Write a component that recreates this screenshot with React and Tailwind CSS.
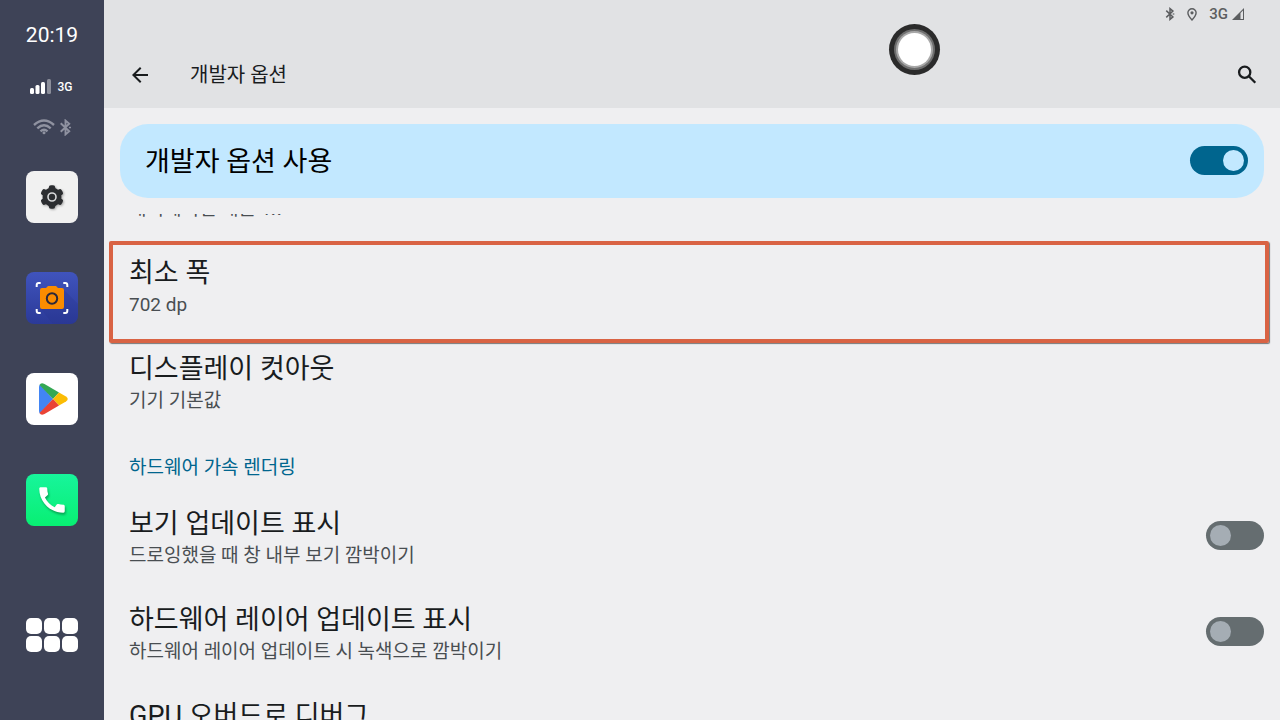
import React, { useState } from 'react';
import { MdArrowBack, MdCall } from 'react-icons/md';

const SettingsIcon = () => (
  <svg viewBox="0 0 52 52" className="w-full h-full drop-shadow-[1px_1px_1px_rgba(0,0,0,0.3)]">
    <g fill="#2c2e31">
      <circle cx="26" cy="26" r="9.5" />
      {[0, 60, 120].map(angle => (
        <rect key={angle} x="22.8" y="14.2" width="6.4" height="23.6" rx="2.2" transform={`rotate(${angle} 26 26)`} />
      ))}
    </g>
    <circle cx="26" cy="26" r="4" fill="#2c2e31" stroke="#d9dadb" strokeWidth="1.6" />
  </svg>
);

const CameraIcon = () => (
  <svg viewBox="0 0 52 52" className="w-full h-full">
    <path d="M38 18 52 32V52H27L15 37Z" fill="#26348c" opacity=".25" />
    <path
      d="M10.700 15v-2q0-2 2-2h2M37.300 11h2q2 0 2 2v2M41.300 37v2q0 2-2 2h-2M14.700 41h-2q-2 0-2-2v-2"
      fill="none"
      stroke="#fff"
      strokeWidth="2"
    />
    <path d="M16 16h4l2-2h8l2 2h4q2 0 2 2v17q0 2-2 2H16q-2 0-2-2V18q0-2 2-2Z" fill="#fb8c00" />
    <circle cx="26" cy="26.500" r="5.200" fill="none" stroke="#2d2838" strokeWidth="2" />
  </svg>
);

const PlayIcon = () => (
  <svg viewBox="0 0 52 52" className="w-full h-full">
    <path d="M14 11.500Q13 12.500 13 14v24q0 1.500 1 2.500L27 26Z" fill="#4285f4" />
    <path d="M13.500 12q1.500-3 5-1L33 19.500 27 26Z" fill="#34a853" />
    <path d="M33 19.500l7 4q3.500 2.500 0 5l-7 4L27 26Z" fill="#fbbc04" />
    <path d="M13.500 40q1.500 3 5 1L33 32.500 27 26Z" fill="#ea4335" />
  </svg>
);

const SignalBars = () => (
  <svg viewBox="0 0 22 16" className="w-[22px] h-4" fill="#fff">
    <rect x="0" y="10" width="4" height="6" rx="1.500" />
    <rect x="5.500" y="7" width="4" height="9" rx="1.500" />
    <rect x="11" y="4" width="4" height="12" rx="1.500" />
    <rect x="17" y="1" width="4" height="15" rx="1.500" opacity=".4" />
  </svg>
);

const WifiIcon = () => (
  <svg viewBox="0 0 22 16" className="w-[22px] h-4" fill="none" stroke="currentColor" strokeWidth="2.4">
    <path d="M1 6Q11-3 21 6M4.300 9.300Q11 3.300 17.700 9.300M7.500 12.300Q11 9.200 14.500 12.300" />
    <circle cx="11" cy="13.700" r="1.500" fill="currentColor" stroke="none" />
  </svg>
);

const BluetoothIcon = ({ className }) => (
  <svg viewBox="0 0 12 16" className={className} fill="none" stroke="currentColor" strokeWidth="1.8">
    <path d="M1.500 4 9.500 11.500 6 14.500V1.500L9.500 4.500 1.500 12" />
    <path d="M9.200 8h2" strokeWidth="1.4" />
  </svg>
);

const PlaceIcon = () => (
  <svg viewBox="0 0 10 13" className="w-2.5 h-[13px]" fill="none" stroke="currentColor" strokeWidth="1.4">
    <path d="M5 12Q.9 7.600.9 4.800a4.100 4.100 0 0 1 8.200 0Q9.100 7.600 5 12Z" />
    <circle cx="5" cy="4.800" r="1.600" fill="currentColor" stroke="none" />
  </svg>
);

const SearchIcon = () => (
  <svg viewBox="0 0 24 24" className="w-6 h-6" fill="none" stroke="currentColor" strokeWidth="2.3">
    <circle cx="9.700" cy="9.200" r="5.600" />
    <path d="M13.800 13.300 20.300 19.800" />
  </svg>
);

const apps = [
  { name: '설정', icon: <SettingsIcon />, style: 'bg-[#f1f1f1]' },
  { name: '스크린샷', icon: <CameraIcon />, style: 'bg-linear-to-b from-[#4054bd] to-[#2b3a98]' },
  { name: 'Play 스토어', icon: <PlayIcon />, style: 'bg-white' },
  {
    name: '전화',
    icon: <MdCall className="w-[34px] h-[34px] text-white drop-shadow-[1px_2px_1px_rgba(0,90,40,0.5)]" />,
    style: 'bg-linear-to-b from-[#17f59b] to-[#08ef72]'
  }
];

// Left launcher bar
const Sidebar = () => (
  <nav className="w-[104px] shrink-0 bg-[#3e4357] text-white flex flex-col items-center pt-[23px] pb-[68px]">
    <time className="text-[21px] leading-6">20:19</time>
    <div className="mt-[31px] h-4 flex items-center gap-1.5 pr-0.5">
      <SignalBars />
      <span className="text-xs leading-4 pt-0.5 font-medium">3G</span>
    </div>
    <div className="mt-[23px] h-5 mb-[34px] flex items-center gap-1 text-[#8f92a0]">
      <WifiIcon />
      <BluetoothIcon className="w-[13px] h-[17px]" />
    </div>
    <div className="flex flex-col gap-[49px]">
      {apps.map(app => (
        <button
          key={app.name}
          aria-label={app.name}
          className={`w-[52px] h-[52px] rounded-lg overflow-hidden flex items-center justify-center ${app.style}`}
        >
          {app.icon}
        </button>
      ))}
    </div>
    <button aria-label="모든 앱" className="mt-auto grid grid-cols-3 gap-0.5">
      {[1, 2, 3, 4, 5, 6].map(n => (
        <span key={n} className="w-4 h-4 rounded-[5px] bg-white" />
      ))}
    </button>
  </nav>
);

const Switch = ({ id, checked, onChange }) => (
  <input
    id={id}
    type="checkbox"
    role="switch"
    checked={checked}
    onChange={e => onChange(e.target.checked)}
    className="appearance-none shrink-0 w-[58px] h-[29px] rounded-full p-1 flex items-center cursor-pointer bg-[#656d70] checked:bg-[#00658e] checked:justify-end before:w-[21px] before:h-[21px] before:rounded-full before:bg-[#a5adb4] checked:before:bg-[#c2e8ff]"
  />
);

const Row = ({ title, summary, highlighted, children, id }) => (
  <div className="relative pl-[25px] pr-4 py-4 flex justify-between">
    <div>
      {id ? (
        <label htmlFor={id} className="block text-[27px] leading-8 text-[#191c1e]">{title}</label>
      ) : (
        <h2 className="text-[27px] leading-8 text-[#191c1e]">{title}</h2>
      )}
      <p className="text-[19px] leading-8 text-[#494e52]">{summary}</p>
    </div>
    <div className="pt-[13px]">{children}</div>
    {highlighted && (
      <div className="absolute left-[5px] right-[11px] top-0 -bottom-1.5 rounded-xs border-4 border-[#d96344] shadow-[1px_1px_1px_rgba(0,0,0,0.5)] pointer-events-none" />
    )}
  </div>
);

const App = () => {
  const [enabled, setEnabled] = useState(true);
  const [viewUpdates, setViewUpdates] = useState(false);
  const [layerUpdates, setLayerUpdates] = useState(false);

  return (
    <div className="relative flex h-screen overflow-hidden bg-[#efeff1] font-['Roboto','Noto_Sans_CJK_KR',sans-serif]">
      <Sidebar />

      <main className="flex-1 min-w-0 flex flex-col">
        <header className="shrink-0 bg-[#e1e2e4]">
          {/* Status bar */}
          <div className="h-7 pr-9 flex items-center justify-end text-[#5c5e60]">
            <BluetoothIcon className="w-2.5 h-3.5 mr-3" />
            <PlaceIcon />
            <span className="text-[15px] leading-5 font-medium ml-3 mr-1">3G</span>
            <svg viewBox="0 0 12 12" className="w-3 h-3">
              <path d="M0 12 12 0V12Z" fill="currentColor" />
              <path d="M8.500 5v6H11V2.500Z" fill="#e1e2e4" />
            </svg>
          </div>
          {/* Toolbar */}
          <div className="h-20 pl-6 pr-[21px] pt-3.5 flex items-center">
            <button aria-label="뒤로" className="mr-[38px] text-[#191c1e]">
              <MdArrowBack className="w-6 h-6" />
            </button>
            <h1 className="flex-1 text-xl leading-8 text-[#191c1e]">개발자 옵션</h1>
            <button aria-label="검색" className="text-[#191c1e]">
              <SearchIcon />
            </button>
          </div>
        </header>

        <div className="shrink-0 m-4 pl-[25px] pr-4 pb-px h-[74px] rounded-[28px] bg-[#c2e8ff] flex items-center justify-between">
          <label htmlFor="dev-options" className="pt-[3px] text-[27px] leading-8 text-black">개발자 옵션 사용</label>
          <Switch id="dev-options" checked={enabled} onChange={setEnabled} />
        </div>

        <section className="flex-1 min-h-0 overflow-hidden">
          {/* Tail of the row scrolled under the main switch */}
          <div className="h-[27px] overflow-hidden pl-[25px] pb-4 flex flex-col justify-end">
            <p className="text-[19px] leading-8 text-[#494e52]">애니메이션 배율 1x</p>
          </div>
          <Row title="최소 폭" summary="702 dp" highlighted />
          <Row title="디스플레이 컷아웃" summary="기기 기본값" />
          <h3 className="h-[59px] pl-[25px] pt-[19px] text-[19px] leading-8 text-[#00658e]">하드웨어 가속 렌더링</h3>
          <Row id="view-updates" title="보기 업데이트 표시" summary="드로잉했을 때 창 내부 보기 깜박이기">
            <Switch id="view-updates" checked={viewUpdates} onChange={setViewUpdates} />
          </Row>
          <Row id="layer-updates" title="하드웨어 레이어 업데이트 표시" summary="하드웨어 레이어 업데이트 시 녹색으로 깜박이기">
            <Switch id="layer-updates" checked={layerUpdates} onChange={setLayerUpdates} />
          </Row>
          <Row title="GPU 오버드로 디버그" summary="사용 안함" />
        </section>
      </main>

      {/* Floating assistive button */}
      <button
        aria-label="보조 메뉴"
        className="absolute left-[889px] top-6 w-[51px] h-[51px] rounded-full bg-[#2b2b2b] p-[5px] flex"
      >
        <span className="flex-1 rounded-full bg-[#6e6e6e] p-0.5 flex">
          <span className="flex-1 rounded-full bg-[#a8a8a8] p-0.5 flex">
            <span className="flex-1 rounded-full bg-white" />
          </span>
        </span>
      </button>
    </div>
  );
};

export default App;
